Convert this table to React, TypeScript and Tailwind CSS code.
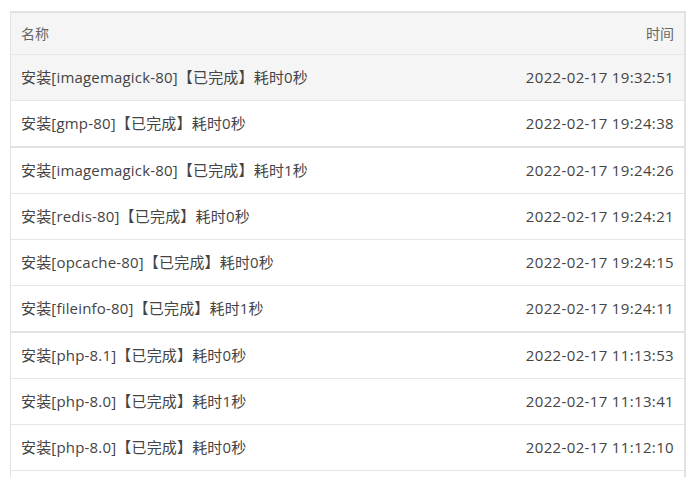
const rows = [
  { name: '安装[imagemagick-80]【已完成】耗时0秒', time: '2022-02-17 19:32:51', active: true },
  { name: '安装[gmp-80]【已完成】耗时0秒', time: '2022-02-17 19:24:38', thick: true },
  { name: '安装[imagemagick-80]【已完成】耗时1秒', time: '2022-02-17 19:24:26' },
  { name: '安装[redis-80]【已完成】耗时0秒', time: '2022-02-17 19:24:21' },
  { name: '安装[opcache-80]【已完成】耗时0秒', time: '2022-02-17 19:24:15' },
  { name: '安装[fileinfo-80]【已完成】耗时1秒', time: '2022-02-17 19:24:11', thick: true },
  { name: '安装[php-8.1]【已完成】耗时0秒', time: '2022-02-17 11:13:53' },
  { name: '安装[php-8.0]【已完成】耗时1秒', time: '2022-02-17 11:13:41' },
  { name: '安装[php-8.0]【已完成】耗时0秒', time: '2022-02-17 11:12:10' },
];

export default function App() {
  return (
    <div
      className="w-[692px] h-[477px] overflow-hidden bg-white pt-[11px] pl-[10px] text-[15px]"
      style={{ fontFamily: '"Open Sans", "Noto Sans CJK SC", sans-serif' }}
    >
      <div className="w-[676px] border-t-2 border-l border-r-2 border-[#e2e2e2]">
        <div className="flex items-center justify-between h-[42px] px-[10px] pb-[1px] bg-[#f5f5f5] border-b border-[#e6e6e6] text-[14px] text-[#666]">
          <span>名称</span>
          <span>时间</span>
        </div>
        {rows.map((row) => (
          <div
            key={row.time + row.name}
            className={`flex items-center justify-between px-[10px] pb-[1px] text-[#444] ${
              row.active ? 'bg-[#f5f5f5]' : 'bg-white'
            } ${row.thick ? 'h-[47px] border-b-2 border-[#e2e2e2]' : 'h-[46px] border-b border-[#e6e6e6]'}`}
          >
            <span className="tracking-[0.18px]">{row.name}</span>
            <span className="tracking-[0.35px]">{row.time}</span>
          </div>
        ))}
        <div className="h-[46px]" />
      </div>
    </div>
  );
}
